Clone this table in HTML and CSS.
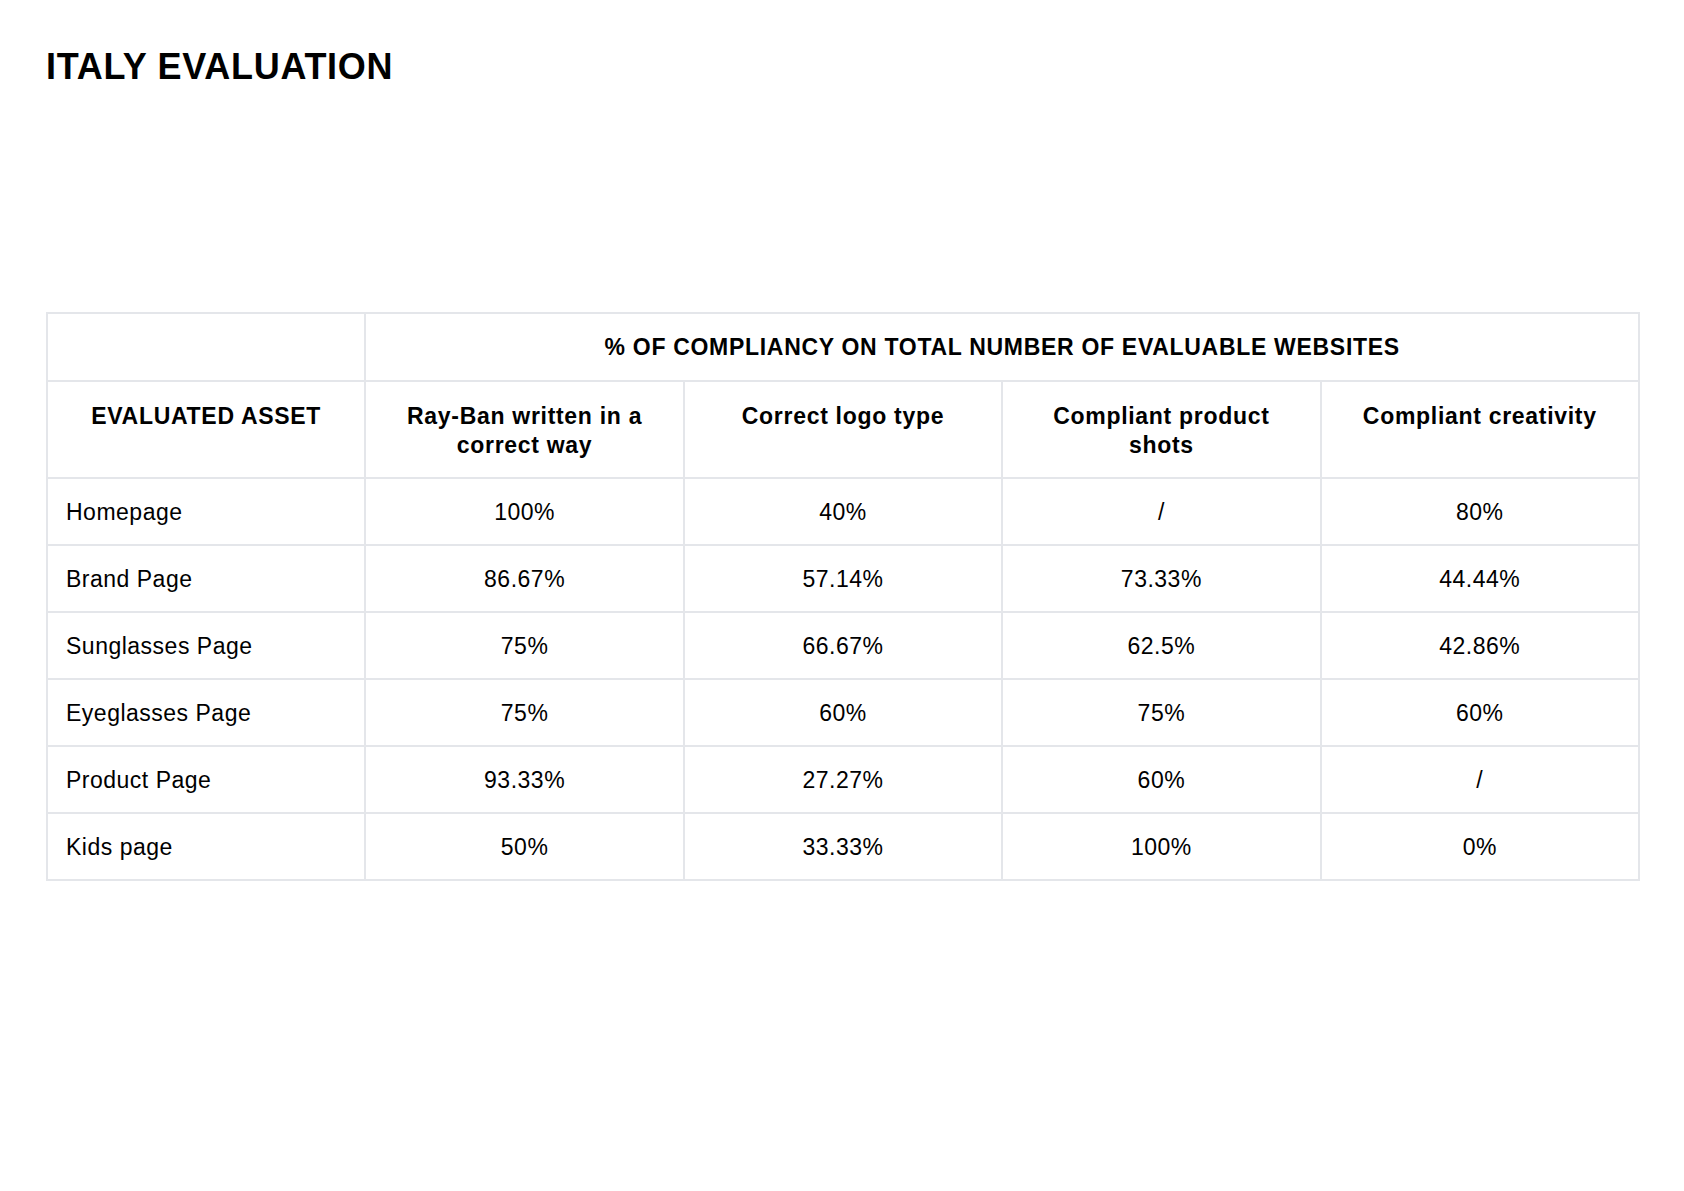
FILE: index.html
```html
<!DOCTYPE html>
<html lang="en">
<head>
<meta charset="utf-8">
<title>Italy Evaluation</title>
<link rel="stylesheet" href="styles.css">
</head>
<body>
<main class="page">
  <h1 class="title">ITALY EVALUATION</h1>
  <table class="eval">
    <thead>
      <tr class="head-top">
        <th></th>
        <th colspan="4">% OF COMPLIANCY ON TOTAL NUMBER OF EVALUABLE WEBSITES</th>
      </tr>
      <tr class="head-cols">
        <th>EVALUATED ASSET</th>
        <th>Ray-Ban written in a correct way</th>
        <th>Correct logo type</th>
        <th>Compliant product shots</th>
        <th>Compliant creativity</th>
      </tr>
    </thead>
    <tbody>
      <tr><td>Homepage</td><td>100%</td><td>40%</td><td>/</td><td>80%</td></tr>
      <tr><td>Brand Page</td><td>86.67%</td><td>57.14%</td><td>73.33%</td><td>44.44%</td></tr>
      <tr><td>Sunglasses Page</td><td>75%</td><td>66.67%</td><td>62.5%</td><td>42.86%</td></tr>
      <tr><td>Eyeglasses Page</td><td>75%</td><td>60%</td><td>75%</td><td>60%</td></tr>
      <tr><td>Product Page</td><td>93.33%</td><td>27.27%</td><td>60%</td><td>/</td></tr>
      <tr><td>Kids page</td><td>50%</td><td>33.33%</td><td>100%</td><td>0%</td></tr>
    </tbody>
  </table>
</main>
</body>
</html>
```

FILE: styles.css
```css
html, body {
  margin: 0;
  padding: 0;
  background: #ffffff;
}

body {
  font-family: "Liberation Sans", Arial, Helvetica, sans-serif;
  color: #000000;
}

.page {
  padding: 47px 44px 0 46px;
}

.title {
  margin: 0;
  font-size: 36px;
  line-height: 40px;
  font-weight: bold;
  letter-spacing: 0.7px;
}

.eval {
  margin-top: 225px;
  width: 100%;
  table-layout: fixed;
  border-collapse: collapse;
  font-size: 23px;
}

.eval th,
.eval td {
  border: 2px solid #e4e6ea;
  padding: 0 18px;
  line-height: 29px;
}

.eval th {
  font-weight: bold;
  text-align: center;
  letter-spacing: 0.7px;
}

.head-top th {
  height: 65px;
  vertical-align: middle;
  padding-top: 1px;
}

.head-cols th {
  vertical-align: top;
  padding-top: 20px;
  padding-bottom: 17px;
}

.eval td {
  height: 64px;
  padding-top: 1px;
  text-align: center;
  vertical-align: middle;
  font-weight: normal;
  letter-spacing: 0.5px;
}

.eval td:first-child {
  text-align: left;
}
```
